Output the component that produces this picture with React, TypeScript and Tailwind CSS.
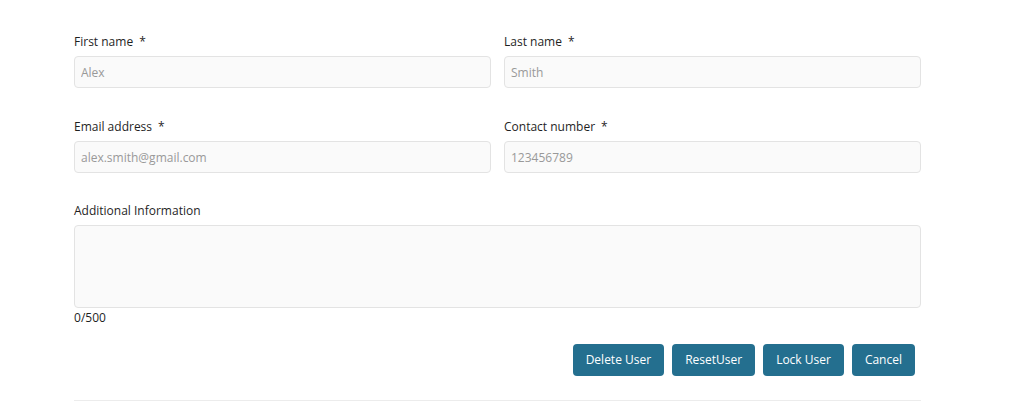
import React, { useState } from "react";

const Field = ({ label, required, placeholder }: { label: string; required?: boolean; placeholder: string }) => (
  <div className="flex flex-col">
    <label className="text-[12px] leading-[18px] text-[#1f1f1f] mb-[5px]">
      {label}
      {required && <span className="ml-[6px]">*</span>}
    </label>
    <input
      className="h-[32px] w-full rounded-[4px] border border-[#e3e3e3] bg-[#fafafa] px-[6px] text-[12px] text-[#333] placeholder:text-[#999] outline-none"
      placeholder={placeholder}
    />
  </div>
);

export default function App() {
  const [info, setInfo] = useState("");
  return (
    <div className="min-h-[401px] w-full bg-white font-['Open_Sans',sans-serif]">
      <div className="ml-[74px] w-[847px] pt-[33px]">
        <div className="grid grid-cols-2 gap-x-[13px] gap-y-[30px]">
          <Field label="First name" required placeholder="Alex" />
          <Field label="Last name" required placeholder="Smith" />
          <Field label="Email address" required placeholder="alex.smith@gmail.com" />
          <Field label="Contact number" required placeholder="123456789" />
        </div>
        <div className="mt-[29px] flex flex-col">
          <label className="text-[12px] leading-[18px] text-[#1f1f1f] mb-[5px]">Additional Information</label>
          <textarea
            value={info}
            maxLength={500}
            onChange={(e) => setInfo(e.target.value)}
            className="h-[83px] w-full resize-none rounded-[4px] border border-[#e3e3e3] bg-[#fafafa] px-[6px] py-[6px] text-[12px] outline-none"
          />
          <span className="text-[12px] leading-[18px] text-[#1f1f1f] mt-[1px]">{info.length}/500</span>
        </div>
        <div className="mt-[17px] flex justify-end gap-[8px] pr-[6px]">
          {["Delete User", "ResetUser", "Lock User", "Cancel"].map((b) => (
            <button
              key={b}
              className="h-[32px] rounded-[4px] bg-[#246f8f] px-[13px] text-[12px] text-white"
            >
              {b}
            </button>
          ))}
        </div>
        <div className="mt-[24px] border-t border-[#ececec]" />
      </div>
    </div>
  );
}
